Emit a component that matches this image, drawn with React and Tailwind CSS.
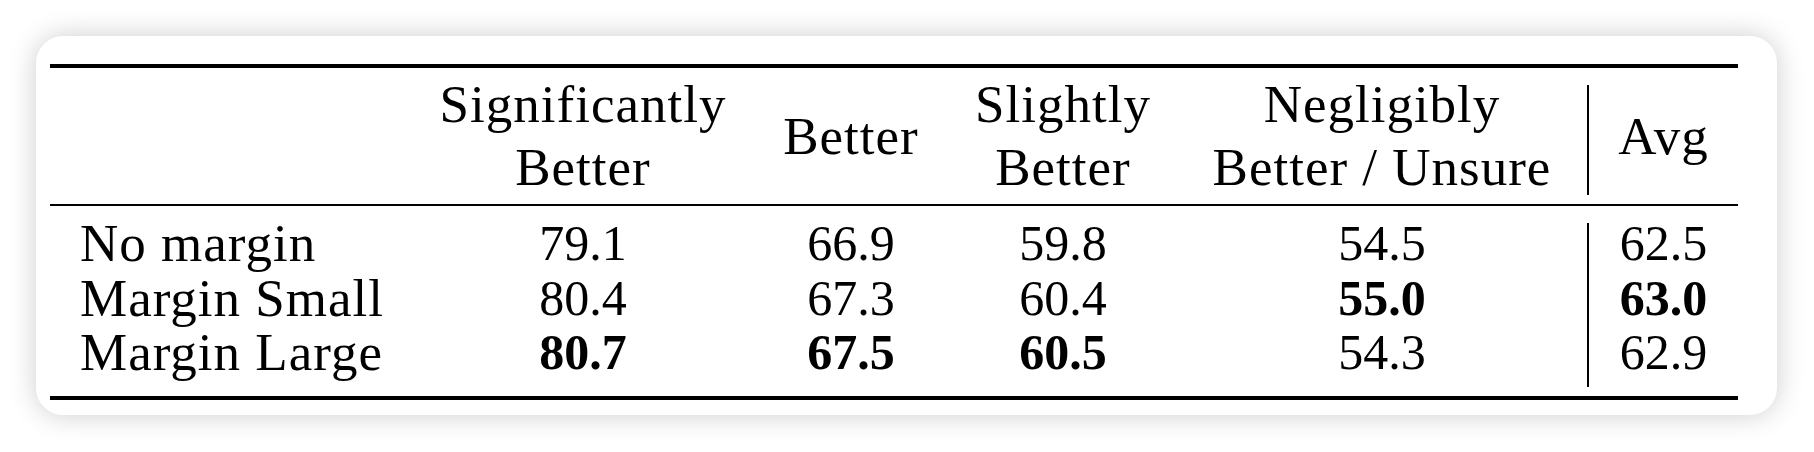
const cols = "grid grid-cols-[363px_340px_196px_228px_410px_151px]";

const rows = [
  { label: "No margin", vals: ["79.1", "66.9", "59.8", "54.5"], avg: "62.5", bold: [] },
  { label: "Margin Small", vals: ["80.4", "67.3", "60.4", "55.0"], avg: "63.0", bold: [3, 4] },
  { label: "Margin Large", vals: ["80.7", "67.5", "60.5", "54.3"], avg: "62.9", bold: [0, 1, 2] },
];

const HeadCell = ({ lines, className = "" }) => (
  <div
    className={`h-[110px] flex flex-col items-center justify-center pb-[8px] text-[53px] leading-[63px] tracking-[1px] whitespace-nowrap ${className}`}
  >
    {lines.map((l) => (
      <span key={l}>{l}</span>
    ))}
  </div>
);

const App = () => {
  return (
    <div
      className="w-full h-[452px] bg-white pt-[36px] pl-[36px] text-black"
      style={{ fontFamily: '"Liberation Serif", "Times New Roman", serif' }}
    >
      <div className="w-[1741px] h-[379px] rounded-[27px] bg-white shadow-[0_0_28px_rgba(0,0,0,0.2)] pl-[14px] pt-[28px]">
        <div className="w-[1688px]">
          {/* top rule */}
          <div className="h-[4px] bg-black" />

          {/* header */}
          <div className={`${cols} grid-rows-[110px] h-[110px] mt-[17px]`}>
            <div />
            <HeadCell lines={["Significantly", "Better"]} />
            <HeadCell lines={["Better"]} />
            <HeadCell lines={["Slightly", "Better"]} />
            <HeadCell lines={["Negligibly", "Better / Unsure"]} />
            <HeadCell lines={["Avg"]} className="border-l-2 border-black" />
          </div>

          {/* mid rule */}
          <div className="h-[2px] bg-black mt-[9px]" />

          {/* body */}
          <div className="mt-[17px] h-[164px]">
            {rows.map((r) => (
              <div key={r.label} className={`${cols} h-[54.67px]`}>
                <div className="pl-[30px] text-[53px] leading-[40px] tracking-[1px] whitespace-nowrap">{r.label}</div>
                {r.vals.map((v, i) => (
                  <div
                    key={i}
                    className={`text-center text-[50px] leading-[40px] ${r.bold.includes(i) ? "font-bold" : ""}`}
                  >
                    {v}
                  </div>
                ))}
                <div
                  className={`border-l-2 border-black text-center text-[50px] leading-[40px] ${r.bold.includes(4) ? "font-bold" : ""}`}
                >
                  {r.avg}
                </div>
              </div>
            ))}
          </div>

          {/* bottom rule */}
          <div className="h-[4px] bg-black mt-[9px]" />
        </div>
      </div>
    </div>
  );
};

export default App;
